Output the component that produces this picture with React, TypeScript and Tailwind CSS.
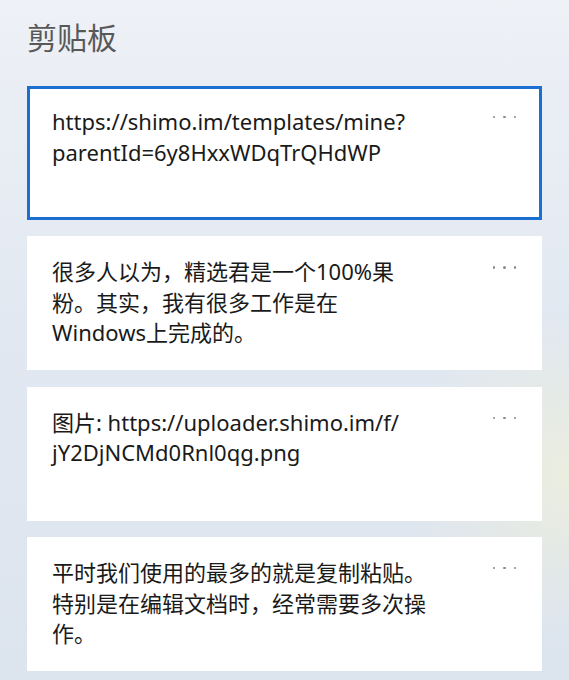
import React from "react";

const items: { lines: string[]; active?: boolean }[] = [
  {
    lines: ["https://shimo.im/templates/mine?", "parentId=6y8HxxWDqTrQHdWP"],
    active: true,
  },
  {
    lines: ["很多人以为，精选君是一个100%果", "粉。其实，我有很多工作是在", "Windows上完成的。"],
  },
  {
    lines: ["图片: https://uploader.shimo.im/f/", "jY2DjNCMd0Rnl0qg.png"],
  },
  {
    lines: ["平时我们使用的最多的就是复制粘贴。", "特别是在编辑文档时，经常需要多次操", "作。"],
  },
];

const Dots = () => (
  <div className="flex h-[22px] items-center gap-[8px] self-start">
    <span className="block h-[2.5px] w-[2.5px] rounded-full bg-[#8a8a8a]" />
    <span className="block h-[2.5px] w-[2.5px] rounded-full bg-[#8a8a8a]" />
    <span className="block h-[2.5px] w-[2.5px] rounded-full bg-[#8a8a8a]" />
  </div>
);

const Card = ({ lines, active }: { lines: string[]; active?: boolean }) => {
  return (
    <div
      className={
        active
          ? "flex h-[134px] items-start justify-between border-[3px] border-[#1a6fd0] bg-white pl-[22px] pr-[23px] pt-[17px]"
          : "flex h-[134px] items-start justify-between bg-white pl-[25px] pr-[26px] pt-[20px]"
      }
    >
      <div className="text-[22px] leading-[30.5px] text-[#1a1a1a]">
        {lines.map((l, i) => (
          <div key={i} className="whitespace-nowrap">
            {l}
          </div>
        ))}
      </div>
      <Dots />
    </div>
  );
};

export default function App() {
  return (
    <div
      className="relative h-[680px] w-[569px] overflow-hidden bg-gradient-to-b from-[#eef1f6] via-[#e1e8f1] to-[#dce4ee]"
      style={{ fontFamily: '"Noto Sans", "Noto Sans CJK SC", sans-serif' }}
    >
      <div className="pointer-events-none absolute inset-0 bg-[radial-gradient(circle_at_100%_70%,rgba(240,240,215,0.7),transparent_22%)]" />
      <div className="relative px-[27px] pt-[19px]">
        <div className="text-[30px] leading-[38px] text-[#585858]">剪贴板</div>
        <div className="mt-[29px] flex flex-col gap-[16.4px]">
          {items.map((it, i) => (
            <Card key={i} lines={it.lines} active={it.active} />
          ))}
        </div>
      </div>
    </div>
  );
}
